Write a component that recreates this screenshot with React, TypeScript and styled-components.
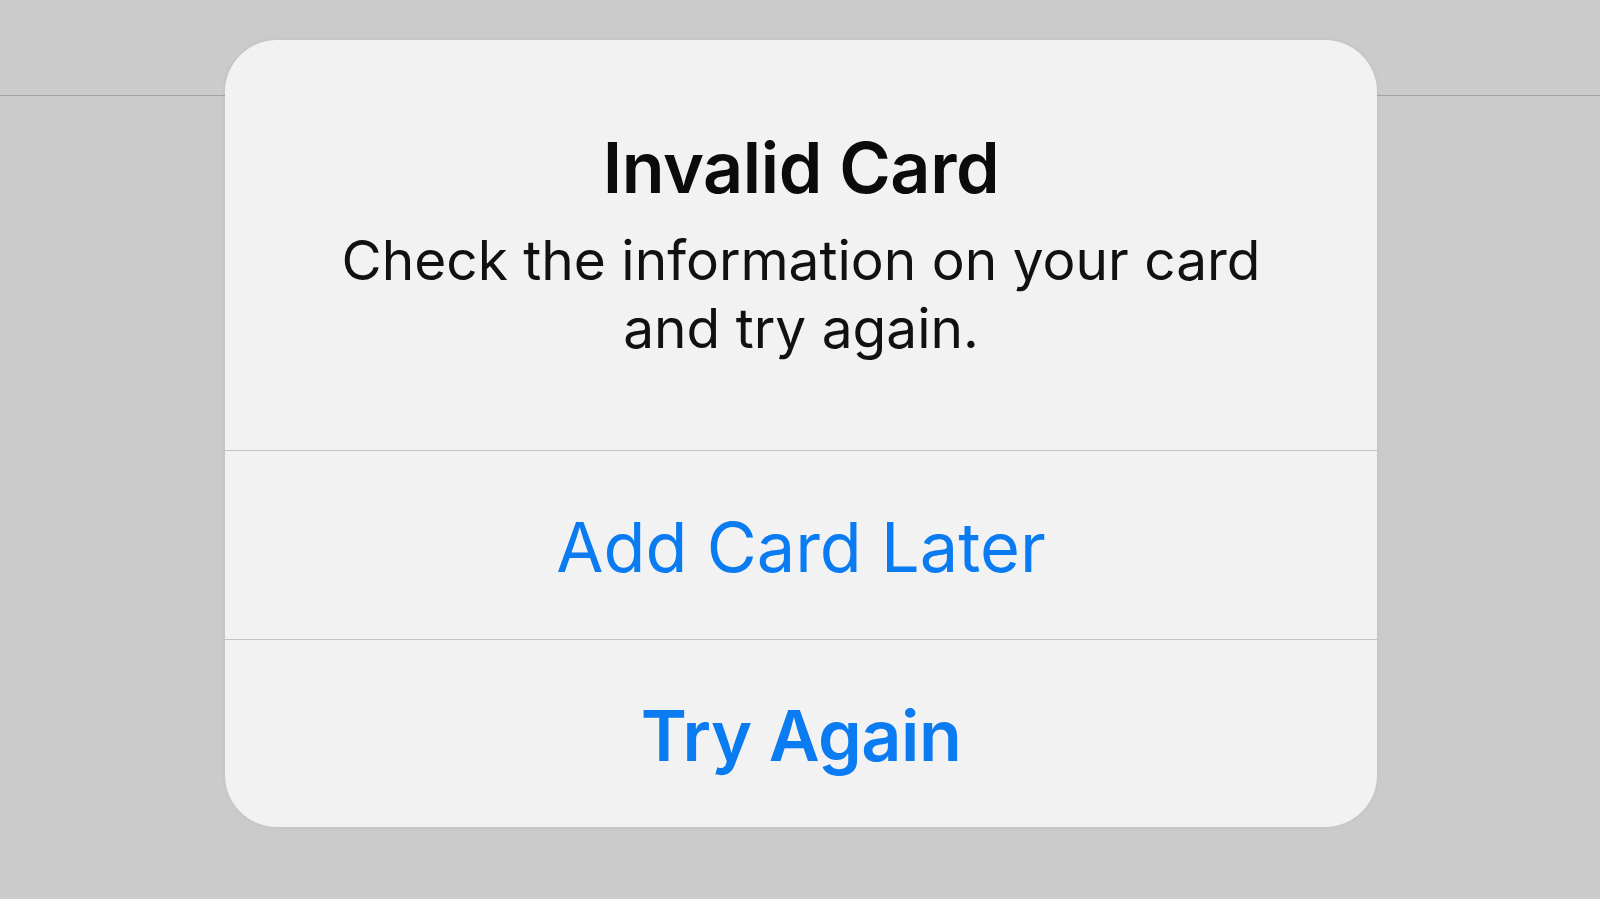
import React from "react";
import styled, { createGlobalStyle } from "styled-components";

const GlobalStyle = createGlobalStyle`
  html, body {
    margin: 0;
    padding: 0;
    background: #cbcbcb;
    font-family: Inter, "Liberation Sans", Arial, sans-serif;
  }
  * { box-sizing: border-box; }
`;

const Page = styled.div`
  position: relative;
  width: 100%;
  height: 899px;
  background: #cbcbcb;
  overflow: hidden;
  display: flex;
  flex-direction: column;
`;

const NavBar = styled.div`
  height: 96px;
  border-bottom: 1px solid #a3a3a3;
  background: #cbcbcb;
`;

const Overlay = styled.div`
  position: absolute;
  top: 40px;
  left: 0;
  right: 0;
  display: flex;
  justify-content: center;
`;

const Alert = styled.div`
  width: 1152px;
  height: 787px;
  margin-left: 2px;
  background: #f2f2f2;
  border-radius: 52px;
  box-shadow: 0 0 5px rgba(0, 0, 0, 0.06);
  display: flex;
  flex-direction: column;
  overflow: hidden;
`;

const Header = styled.div`
  height: 410px;
  padding: 88px 80px 0;
  display: flex;
  flex-direction: column;
  align-items: center;
  text-align: center;
`;

const Title = styled.h1`
  margin: 0;
  font-family: Inter, "Liberation Sans", Arial, sans-serif;
  font-size: 70px;
  line-height: 80px;
  font-weight: 600;
  letter-spacing: -0.4px;
  color: #0b0b0b;
`;

const Message = styled.p`
  margin: 18px 0 0;
  max-width: 960px;
  font-family: Inter, "Liberation Sans", Arial, sans-serif;
  font-size: 55px;
  line-height: 68px;
  font-weight: 400;
  letter-spacing: 0px;
  color: #111;
`;

const Action = styled.button<{ $bold?: boolean }>`
  flex: 1;
  border: none;
  border-top: 1px solid #c4c4c4;
  background: transparent;
  font-family: Inter, "Liberation Sans", Arial, sans-serif;
  font-size: ${(p) => (p.$bold ? "70px" : "68.5px")};
  font-weight: ${(p) => (p.$bold ? 600 : 400)};
  letter-spacing: ${(p) => (p.$bold ? "-0.5px" : "0px")};
  color: #0a7bf0;
  padding: 5px 0 0;
  display: flex;
  align-items: center;
  justify-content: center;
  cursor: pointer;
`;

export default function App() {
  return (
    <>
      <GlobalStyle />
      <Page>
        <NavBar />
        <Overlay>
          <Alert>
            <Header>
              <Title>Invalid Card</Title>
              <Message>Check the information on your card and try again.</Message>
            </Header>
            <Action>Add Card Later</Action>
            <Action $bold>Try Again</Action>
          </Alert>
        </Overlay>
      </Page>
    </>
  );
}
